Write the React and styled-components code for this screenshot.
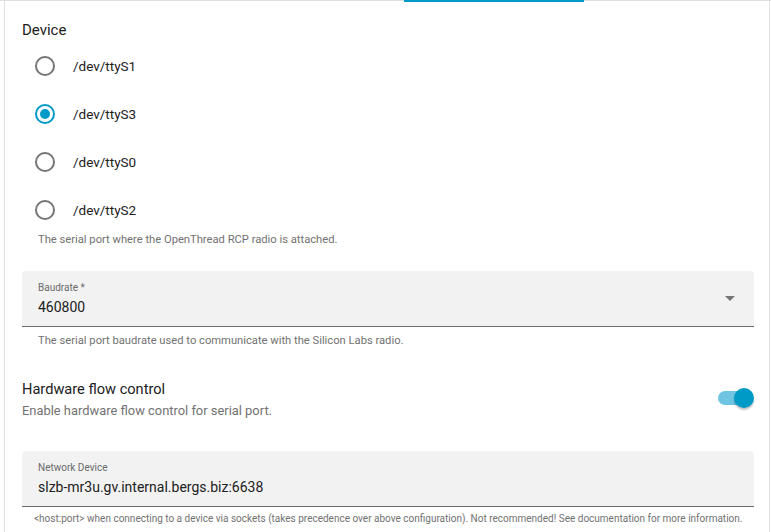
import React from "react";
import styled, { createGlobalStyle } from "styled-components";

const Global = createGlobalStyle`
  html, body { margin: 0; padding: 0; background: #fff; }
  body { font-family: Roboto, "Noto Sans", sans-serif; color: #212121; -webkit-font-smoothing: antialiased; }
`;

const Page = styled.div`
  width: 771px;
  height: 532px;
  overflow: hidden;
`;

const TabBar = styled.div`
  position: relative;
  height: 1px;
  background: #e0e0e0;
`;

const TabIndicator = styled.div`
  position: absolute;
  top: 0;
  left: 404px;
  width: 180px;
  height: 2px;
  background: #009ac7;
  z-index: 2;
`;

const Card = styled.div`
  margin-left: 4px;
  width: 766px;
  box-sizing: border-box;
  border-left: 1px solid #e0e0e0;
  border-right: 1px solid #e0e0e0;
  padding: 17px 15px 0 17px;
  height: 531px;
`;

const SectionLabel = styled.div`
  font-size: 15px;
  line-height: 24px;
  height: 24px;
`;

const RadioList = styled.div`
  display: flex;
  flex-direction: column;
`;

const RadioRow = styled.label`
  display: flex;
  align-items: center;
  height: 48px;
  padding-left: 13px;
  gap: 18px;
  font-size: 13.5px;
  color: #212121;
`;

const RadioCircle = styled.span`
  width: 20px;
  height: 20px;
  box-sizing: border-box;
  border-radius: 50%;
  border: 2px solid ${(p) => (p.$checked ? "#009ac7" : "#757575")};
  display: flex;
  align-items: center;
  justify-content: center;
  &::after {
    content: "";
    width: 10px;
    height: 10px;
    border-radius: 50%;
    background: #009ac7;
    display: ${(p) => (p.$checked ? "block" : "none")};
  }
`;

const Helper = styled.div`
  font-size: ${(p) => p.$size ?? 11.2}px;
  line-height: 16px;
  color: #727272;
  white-space: nowrap;
  padding-left: ${(p) => p.$indent ?? 16}px;
  margin-top: ${(p) => p.$mt ?? 0}px;
`;

const Field = styled.div`
  position: relative;
  height: 56px;
  box-sizing: border-box;
  background: #f2f2f2;
  border-radius: 4px 4px 0 0;
  border-bottom: 1px solid #6b6b6b;
  padding: 11px 16px 0 16px;
  margin-top: ${(p) => p.$mt}px;
`;

const FieldLabel = styled.div`
  font-size: 10px;
  line-height: 12px;
  color: #6b6b6b;
`;

const FieldValue = styled.div`
  font-size: 14px;
  line-height: 24px;
  color: #212121;
  margin-top: 1px;
`;

const Arrow = styled.span`
  position: absolute;
  right: 19px;
  top: 25px;
  width: 0;
  height: 0;
  border-left: 5px solid transparent;
  border-right: 5px solid transparent;
  border-top: 5px solid #757575;
`;

const ToggleRow = styled.div`
  display: flex;
  align-items: center;
  justify-content: space-between;
  margin-top: 29px;
`;

const ToggleText = styled.div`
  display: flex;
  flex-direction: column;
`;

const ToggleTitle = styled.div`
  font-size: 14.6px;
  line-height: 22px;
`;

const ToggleDesc = styled.div`
  font-size: 12.9px;
  line-height: 20px;
  color: #727272;
  margin-top: 1px;
`;

const Switch = styled.span`
  position: relative;
  width: 36px;
  height: 14px;
  margin-top: -4px;
  &::before {
    content: "";
    position: absolute;
    left: 0;
    top: 0;
    width: 32px;
    height: 14px;
    border-radius: 7px;
    background: #6fc4e2;
  }
  &::after {
    content: "";
    position: absolute;
    right: 0;
    top: -3px;
    width: 20px;
    height: 20px;
    border-radius: 50%;
    background: #009ac7;
    box-shadow: 0 2px 2px rgba(0,0,0,0.24);
  }
`;

const devices = [
  { name: "/dev/ttyS1" },
  { name: "/dev/ttyS3", checked: true },
  { name: "/dev/ttyS0" },
  { name: "/dev/ttyS2" },
];

export default function App() {
  return (
    <>
      <Global />
      <Page>
        <TabBar>
          <TabIndicator />
        </TabBar>
        <Card>
          <SectionLabel>Device</SectionLabel>
          <RadioList>
            {devices.map((d) => (
              <RadioRow key={d.name}>
                <RadioCircle $checked={d.checked} />
                {d.name}
              </RadioRow>
            ))}
          </RadioList>
          <Helper $mt={-2}>The serial port where the OpenThread RCP radio is attached.</Helper>
          <Field $mt={23}>
            <FieldLabel>Baudrate *</FieldLabel>
            <FieldValue>460800</FieldValue>
            <Arrow />
          </Field>
          <Helper $mt={6}>The serial port baudrate used to communicate with the Silicon Labs radio.</Helper>
          <ToggleRow>
            <ToggleText>
              <ToggleTitle>Hardware flow control</ToggleTitle>
              <ToggleDesc>Enable hardware flow control for serial port.</ToggleDesc>
            </ToggleText>
            <Switch />
          </ToggleRow>
          <Field $mt={30}>
            <FieldLabel>Network Device</FieldLabel>
            <FieldValue>slzb-mr3u.gv.internal.bergs.biz:6638</FieldValue>
          </Field>
          <Helper $indent={12} $mt={4} $size={10}>
            &lt;host:port&gt; when connecting to a device via sockets (takes precedence over above configuration). Not recommended! See documentation for more information.
          </Helper>
        </Card>
      </Page>
    </>
  );
}
